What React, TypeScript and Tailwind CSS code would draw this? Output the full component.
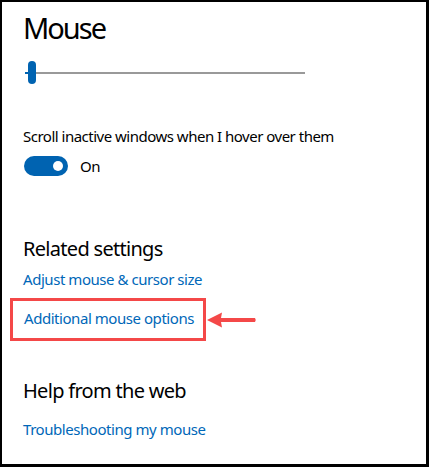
import React, { useState } from 'react';

const font = { fontFamily: '"Noto Sans", "Open Sans", sans-serif' };

function Slider() {
  return (
    <div className="relative mt-[13px] h-[23px] w-[282px] ml-[2px]">
      <div className="absolute left-0 top-[11px] h-[2px] w-[6px] bg-[#0063b1]" />
      <div className="absolute left-[11px] top-[11px] h-[2px] w-[269px] bg-[#999999]" />
      <div className="absolute left-[3px] top-0 h-[23px] w-[8px] rounded-full bg-[#0063b1]" />
    </div>
  );
}

function Toggle({ on, onClick }: { on: boolean; onClick: () => void }) {
  return (
    <button
      onClick={onClick}
      className={`flex h-[20px] w-[44px] items-center rounded-full px-[5px] ${
        on ? 'justify-end bg-[#0063b1]' : 'justify-start border-2 border-black bg-white'
      }`}
    >
      <span className={`block h-[10px] w-[10px] rounded-full ${on ? 'bg-white' : 'bg-black'}`} />
    </button>
  );
}

function ArrowLeft() {
  return (
    <svg width="50" height="16" viewBox="0 0 50 16" className="ml-[1px]">
      <path d="M0 8 L15 0.5 L14 6 L48 6 Q49.5 8 48 10 L14 10 L15 15.5 Z" fill="#f44848" />
    </svg>
  );
}

export default function App() {
  const [scrollInactive, setScrollInactive] = useState(true);

  return (
    <div
      className="h-[467px] w-[429px] overflow-hidden border-l-2 border-t-2 border-r-[3px] border-b-[3px] border-black bg-white pl-[21px] text-black"
      style={font}
    >
      <h1 className="mt-[6px] text-[29px] leading-[40px] font-normal tracking-[-2px]">Mouse</h1>
      <Slider />

      <p className="mt-[42px] text-[15px] leading-[20px] tracking-[-0.5px]">
        Scroll inactive windows when I hover over them
      </p>
      <div className="mt-[10px] ml-[1px] flex items-center gap-[12px]">
        <Toggle on={scrollInactive} onClick={() => setScrollInactive(!scrollInactive)} />
        <span className="text-[15px] leading-[20px] tracking-[-0.5px]">{scrollInactive ? 'On' : 'Off'}</span>
      </div>

      <h2 className="mt-[59px] text-[20px] leading-[28px] font-normal tracking-[-0.7px]">Related settings</h2>
      <a className="mt-[6px] block text-[15px] leading-[20px] tracking-[-0.45px] text-[#0067b8]">
        Adjust mouse &amp; cursor size
      </a>

      <div className="mt-[9px] ml-[-13px] flex items-center">
        <div className="border-[3px] border-[#f44848] pt-[7px] pb-[10px] pl-[11px] pr-[9px]">
          <a className="block text-[15px] leading-[20px] tracking-[-0.45px] text-[#0067b8]">
            Additional mouse options
          </a>
        </div>
        <ArrowLeft />
      </div>

      <h2 className="mt-[36px] text-[20px] leading-[28px] font-normal tracking-[-0.7px]">Help from the web</h2>
      <a className="mt-[14px] block text-[15px] leading-[20px] tracking-[-0.45px] text-[#0067b8]">
        Troubleshooting my mouse
      </a>
    </div>
  );
}
